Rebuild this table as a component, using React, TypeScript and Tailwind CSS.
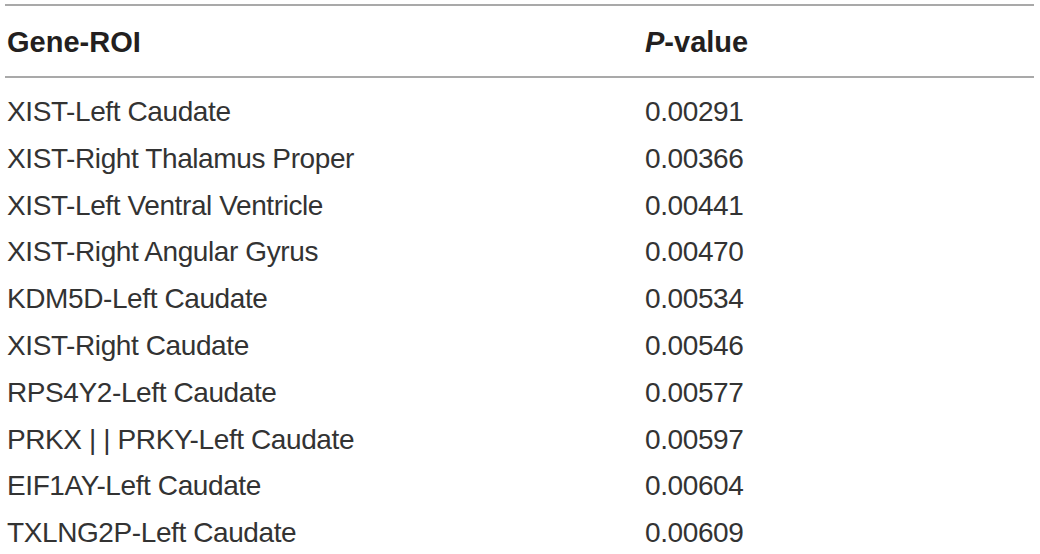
const rows: [string, string][] = [
  ['XIST-Left Caudate', '0.00291'],
  ['XIST-Right Thalamus Proper', '0.00366'],
  ['XIST-Left Ventral Ventricle', '0.00441'],
  ['XIST-Right Angular Gyrus', '0.00470'],
  ['KDM5D-Left Caudate', '0.00534'],
  ['XIST-Right Caudate', '0.00546'],
  ['RPS4Y2-Left Caudate', '0.00577'],
  ['PRKX | | PRKY-Left Caudate', '0.00597'],
  ['EIF1AY-Left Caudate', '0.00604'],
  ['TXLNG2P-Left Caudate', '0.00609'],
];

export default function App() {
  return (
    <div
      className="w-[1040px] h-[554px] overflow-hidden bg-white pt-[4px] pl-[5px] pr-[6px] text-[#231f20]"
      style={{ fontFamily: '"Liberation Sans", Arial, sans-serif' }}
    >
      <div className="grid grid-cols-[638px_1fr] h-[74px] items-center border-y-2 border-[#a9a9a9] pl-[2px] pt-[3px] text-[29px] font-bold">
        <div>Gene-ROI</div>
        <div>
          <span className="italic">P</span>-value
        </div>
      </div>
      <div className="pt-[11px]">
        {rows.map(([roi, p]) => (
          <div
            key={roi}
            className="grid grid-cols-[638px_1fr] h-[46.8px] items-center pl-[2px] text-[28px] leading-[46.8px] tracking-[-0.4px] text-[#333333]"
          >
            <div className="whitespace-nowrap">{roi}</div>
            <div>{p}</div>
          </div>
        ))}
      </div>
    </div>
  );
}
